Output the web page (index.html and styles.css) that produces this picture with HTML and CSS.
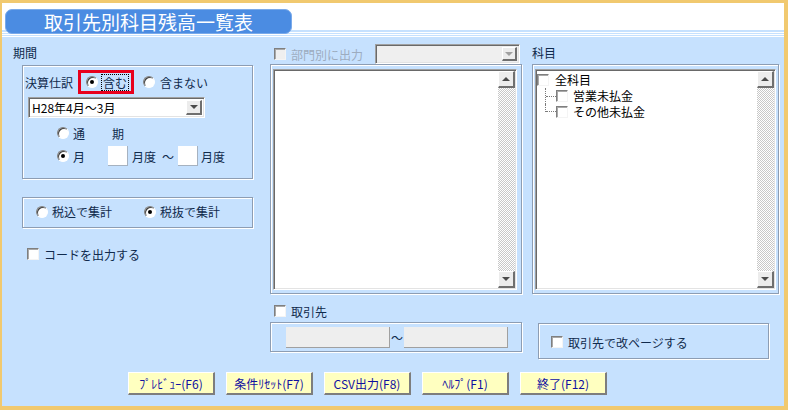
FILE: index.html
```html
<!DOCTYPE html>
<html lang="ja">
<head>
    <meta charset="UTF-8">
    <title>取引先別科目残高一覧表</title>
    <link rel="stylesheet" href="styles.css">
</head>
<body>

<div class="window">
    <header class="titlebar">
        <h1 class="title-tab">取引先別科目残高一覧表</h1>
    </header>

    <div class="content">
        <!-- 期間 -->
        <section class="col-left">
            <div class="caption">期間</div>
            <div class="groupbox period">
                <div class="row journal">
                    <span class="row-label">決算仕訳</span>
                    <label class="opt highlight"><span class="radio checked"></span><span class="focus">含む</span></label>
                    <label class="opt opt-exclude"><span class="radio"></span>含まない</label>
                </div>
                <div class="select period-select">
                    <span class="select-text">H28年4月～3月</span>
                    <span class="drop-btn"><i class="tri-down"></i></span>
                </div>
                <div class="row term-row">
                    <label class="opt"><span class="radio"></span><span class="term-a">通</span><span>期</span></label>
                </div>
                <div class="row month-row">
                    <label class="opt"><span class="radio checked"></span><span class="term-a">月</span></label>
                    <span class="num-box"></span>
                    <span class="unit">月度</span>
                    <span class="tilde">～</span>
                    <span class="num-box num-to"></span>
                    <span class="unit unit-to">月度</span>
                </div>
            </div>

            <div class="groupbox tax">
                <label class="opt tax-in"><span class="radio"></span>税込で集計</label>
                <label class="opt"><span class="radio checked"></span>税抜で集計</label>
            </div>

            <label class="opt check-opt code-check"><span class="check"></span>コードを出力する</label>
        </section>

        <!-- 部門 / 取引先 -->
        <section class="col-mid">
            <div class="dept-row">
                <label class="opt check-opt disabled"><span class="check"></span>部門別に出力</label>
                <div class="select combo-disabled">
                    <span class="select-text"></span>
                    <span class="drop-btn"><i class="tri-down"></i></span>
                </div>
            </div>
            <div class="groupbox list-frame">
                <div class="listbox">
                    <div class="list-area"></div>
                    <div class="vscroll">
                        <span class="sb-btn"><i class="tri-up"></i></span>
                        <span class="sb-track"></span>
                        <span class="sb-btn"><i class="tri-down"></i></span>
                    </div>
                </div>
            </div>
            <div class="client-row">
                <label class="opt check-opt"><span class="check"></span>取引先</label>
            </div>
            <div class="groupbox range-frame">
                <span class="textbox"></span>
                <span class="range-tilde">～</span>
                <span class="textbox"></span>
            </div>
        </section>

        <!-- 科目 -->
        <section class="col-right">
            <div class="caption caption-kamoku">科目</div>
            <div class="groupbox list-frame tree-frame">
                <div class="listbox">
                    <div class="list-area tree">
                        <div class="tree-row">
                            <span class="check"></span><span class="tree-text">全科目</span>
                        </div>
                        <div class="tree-children">
                            <div class="tree-row">
                                <span class="branch"></span><span class="check"></span><span class="tree-text child">営業未払金</span>
                            </div>
                            <div class="tree-row">
                                <span class="branch last"></span><span class="check"></span><span class="tree-text child">その他未払金</span>
                            </div>
                        </div>
                    </div>
                    <div class="vscroll">
                        <span class="sb-btn"><i class="tri-up"></i></span>
                        <span class="sb-track"></span>
                        <span class="sb-btn"><i class="tri-down"></i></span>
                    </div>
                </div>
            </div>
            <div class="groupbox pagebreak">
                <label class="opt check-opt"><span class="check"></span>取引先で改ページする</label>
            </div>
        </section>
    </div>

    <div class="buttons">
        <button type="button" class="btn">ﾌﾟﾚﾋﾞｭｰ(F6)</button>
        <button type="button" class="btn">条件ﾘｾｯﾄ(F7)</button>
        <button type="button" class="btn">CSV出力(F8)</button>
        <button type="button" class="btn">ﾍﾙﾌﾟ(F1)</button>
        <button type="button" class="btn">終了(F12)</button>
    </div>
</div>

</body>
</html>
```

FILE: styles.css
```css
* {
    box-sizing: border-box;
}

body {
    margin: 0;
    font-family: "Noto Sans CJK JP", "Noto Sans", sans-serif;
    font-size: 12px;
    color: #102a4c;
}

.window {
    width: 788px;
    height: 410px;
    border-style: solid;
    border-color: #f1c96f;
    border-width: 3px 4px 4px 2px;
    background-color: #c6e1fe;
}

/* title band */
.titlebar {
    height: 34px;
    padding: 6px 0 0 3px;
    background: linear-gradient(to bottom,
        #fff 0 27px, #c6e1fe 27px 29px, #fff 29px 30px,
        #c6e1fe 30px 31px, #fff 31px 32px, #c6e1fe 32px 33px, #fff 33px 34px);
}

.title-tab {
    margin: 0;
    width: 287px;
    height: 25px;
    line-height: 23px;
    font-size: 19px;
    font-weight: normal;
    color: #fff;
    text-align: center;
    background-color: #4b8ce2;
    border: 1px solid #7aaaea;
    border-radius: 7px;
}

/* columns */
.content {
    display: flex;
    padding: 7px 0 0 11px;
}

.col-left {
    width: 240px;
}

.col-mid {
    width: 252px;
    margin-left: 17px;
}

.col-right {
    width: 247px;
    margin-left: 10px;
}

.caption {
    height: 17px;
    line-height: 17px;
}

.caption-kamoku {
    margin-bottom: 3px;
}

.groupbox {
    border: 1px solid #8d9db3;
    box-shadow: inset 1px 1px 0 #fff, 1px 1px 0 #fff;
}

.row {
    display: flex;
    align-items: center;
}

.opt {
    display: flex;
    align-items: center;
    gap: 4px;
    white-space: nowrap;
}

/* controls */
.radio {
    width: 12px;
    height: 12px;
    flex: none;
    border-radius: 50%;
    background-color: #fff;
    border: 1px solid;
    border-color: #808080 #fff #fff #808080;
    box-shadow: inset 1px 1px 0 #404040;
    display: flex;
    align-items: center;
    justify-content: center;
}

.radio.checked::after {
    content: "";
    width: 4px;
    height: 4px;
    border-radius: 50%;
    background-color: #000;
}

.check {
    width: 12px;
    height: 12px;
    flex: none;
    background-color: #fff;
    border: 1px solid;
    border-color: #7f7f7f #f4f4f4 #f4f4f4 #7f7f7f;
    box-shadow: inset 1px 1px 0 #a9a9a9;
}

.check-opt {
    gap: 5px;
}

.disabled {
    color: #9dacbf;
}

.disabled .check {
    background-color: #efefef;
}

.select {
    display: flex;
    background-color: #fff;
    border: 1px solid;
    border-color: #a0a0a0 #fff #fff #a0a0a0;
    box-shadow: inset 1px 1px 0 #696969, inset -1px -1px 0 #e3e3e3;
    padding: 2px 2px 2px 3px;
}

.select-text {
    flex: 1;
    color: #000;
    line-height: 15px;
}

.drop-btn,
.sb-btn {
    width: 16px;
    flex: none;
    display: flex;
    align-items: center;
    justify-content: center;
    background-color: #ececec;
    border-style: solid;
    border-width: 1px 2px 2px 1px;
    border-color: #fff #6f6f6f #6f6f6f #fff;
}

.tri-down,
.tri-up {
    width: 0;
    height: 0;
    border-left: 4px solid transparent;
    border-right: 4px solid transparent;
}

.tri-down {
    border-top: 4px solid #4a4a4a;
}

.tri-up {
    border-bottom: 4px solid #4a4a4a;
}

/* period group */
.period {
    margin: 4px 0 0 9px;
    width: 231px;
    height: 114px;
    padding: 4px 0 0 2px;
}

.journal {
    height: 24px;
}

.row-label {
    width: 48px;
}

.highlight {
    margin-left: 5px;
    height: 24px;
    padding: 0 3px 0 5px;
    border: 3px solid #e8001c;
}

.focus {
    padding: 0 1px;
    line-height: 15px;
    outline: 1px dotted #000;
}

.opt-exclude {
    margin-left: 9px;
    gap: 5px;
}

.period-select {
    margin: 3px 0 0 3px;
    width: 177px;
    height: 21px;
}

.term-row {
    margin: 8px 0 0 32px;
    height: 14px;
}

.month-row {
    margin: 6px 0 0 32px;
    height: 20px;
}

.term-a {
    width: 35px;
}

.num-box {
    width: 20px;
    height: 20px;
    background-color: #fff;
    border-right: 1px solid #a6b2c0;
    border-bottom: 1px solid #a6b2c0;
}

.unit {
    margin-left: 4px;
}

.tilde {
    margin-left: 6px;
}

.num-to {
    margin-left: 4px;
}

.unit-to {
    margin-left: 3px;
}

/* tax group */
.tax {
    margin: 18px 0 0 9px;
    width: 231px;
    height: 31px;
    display: flex;
    align-items: center;
    padding: 0 0 2px 13px;
}

.tax-in {
    width: 108px;
}

.code-check {
    margin: 19px 0 0 14px;
    height: 14px;
}

/* middle column */
.dept-row {
    display: flex;
    align-items: center;
    height: 20px;
    padding-left: 4px;
}

.combo-disabled {
    margin: 0 2px 0 auto;
    width: 145px;
    height: 20px;
    background-color: #efefef;
}

.combo-disabled .drop-btn {
    width: 15px;
}

.combo-disabled .tri-down {
    border-top-color: #a0a0a0;
}

.list-frame {
    height: 230px;
    padding: 4px 4px 3px 2px;
}

.listbox {
    height: 100%;
    display: flex;
    border: 1px solid;
    border-color: #a0a0a0 #fff #fff #a0a0a0;
    box-shadow: inset 1px 1px 0 #696969, inset -1px -1px 0 #e3e3e3;
    background-color: #fff;
    padding: 1px 1px 1px 1px;
}

.list-area {
    flex: 1;
    background-color: #fff;
}

.vscroll {
    width: 17px;
    display: flex;
    flex-direction: column;
}

.sb-btn {
    width: 17px;
    height: 17px;
}

.sb-track {
    flex: 1;
    background-color: #fff;
    background-image: conic-gradient(#c8c8c8 25%, #fff 0 50%, #c8c8c8 0 75%, #fff 0);
    background-size: 2px 2px;
}

.client-row {
    margin-top: 9px;
    height: 16px;
    display: flex;
    align-items: center;
    padding-left: 4px;
}

.range-frame {
    margin-top: 3px;
    height: 30px;
    display: flex;
    align-items: center;
    padding-left: 15px;
}

.textbox {
    width: 104px;
    height: 21px;
    background-color: #eeeeee;
    border-right: 1px solid #a0a0a0;
    border-bottom: 1px solid #a0a0a0;
}

.range-tilde {
    width: 14px;
    text-align: center;
}

/* right column */
.tree-frame {
    padding-right: 2px;
}

.tree {
    padding-top: 1px;
    color: #000;
}

.tree-row {
    height: 16px;
    display: flex;
    align-items: center;
}

.tree-text {
    margin-left: 6px;
    line-height: 16px;
}

.tree-text.child {
    margin-left: 5px;
}

.tree-children {
    margin-left: 8px;
}

.branch {
    width: 11px;
    align-self: stretch;
    border-left: 1px dotted #7a7a7a;
    display: flex;
    flex-direction: column;
}

.branch::after {
    content: "";
    height: 8px;
    border-bottom: 1px dotted #7a7a7a;
}

.branch.last {
    align-self: flex-start;
    height: 8px;
}

.branch.last::after {
    height: 8px;
}

.pagebreak {
    margin: 29px 0 0 6px;
    width: 231px;
    height: 36px;
    display: flex;
    align-items: center;
    padding: 2px 0 0 12px;
}

/* buttons */
.buttons {
    display: flex;
    gap: 11px;
    margin-top: 13px;
    padding-left: 126px;
}

.btn {
    width: 87px;
    height: 23px;
    padding: 0;
    font-family: "Noto Sans CJK JP", "Noto Sans", sans-serif;
    font-size: 12px;
    color: #1010a0;
    background-color: #ffffc0;
    border-style: solid;
    border-width: 1px 2px 2px 1px;
    border-color: #fff #7d7d7d #7d7d7d #fff;
    cursor: pointer;
}
```
